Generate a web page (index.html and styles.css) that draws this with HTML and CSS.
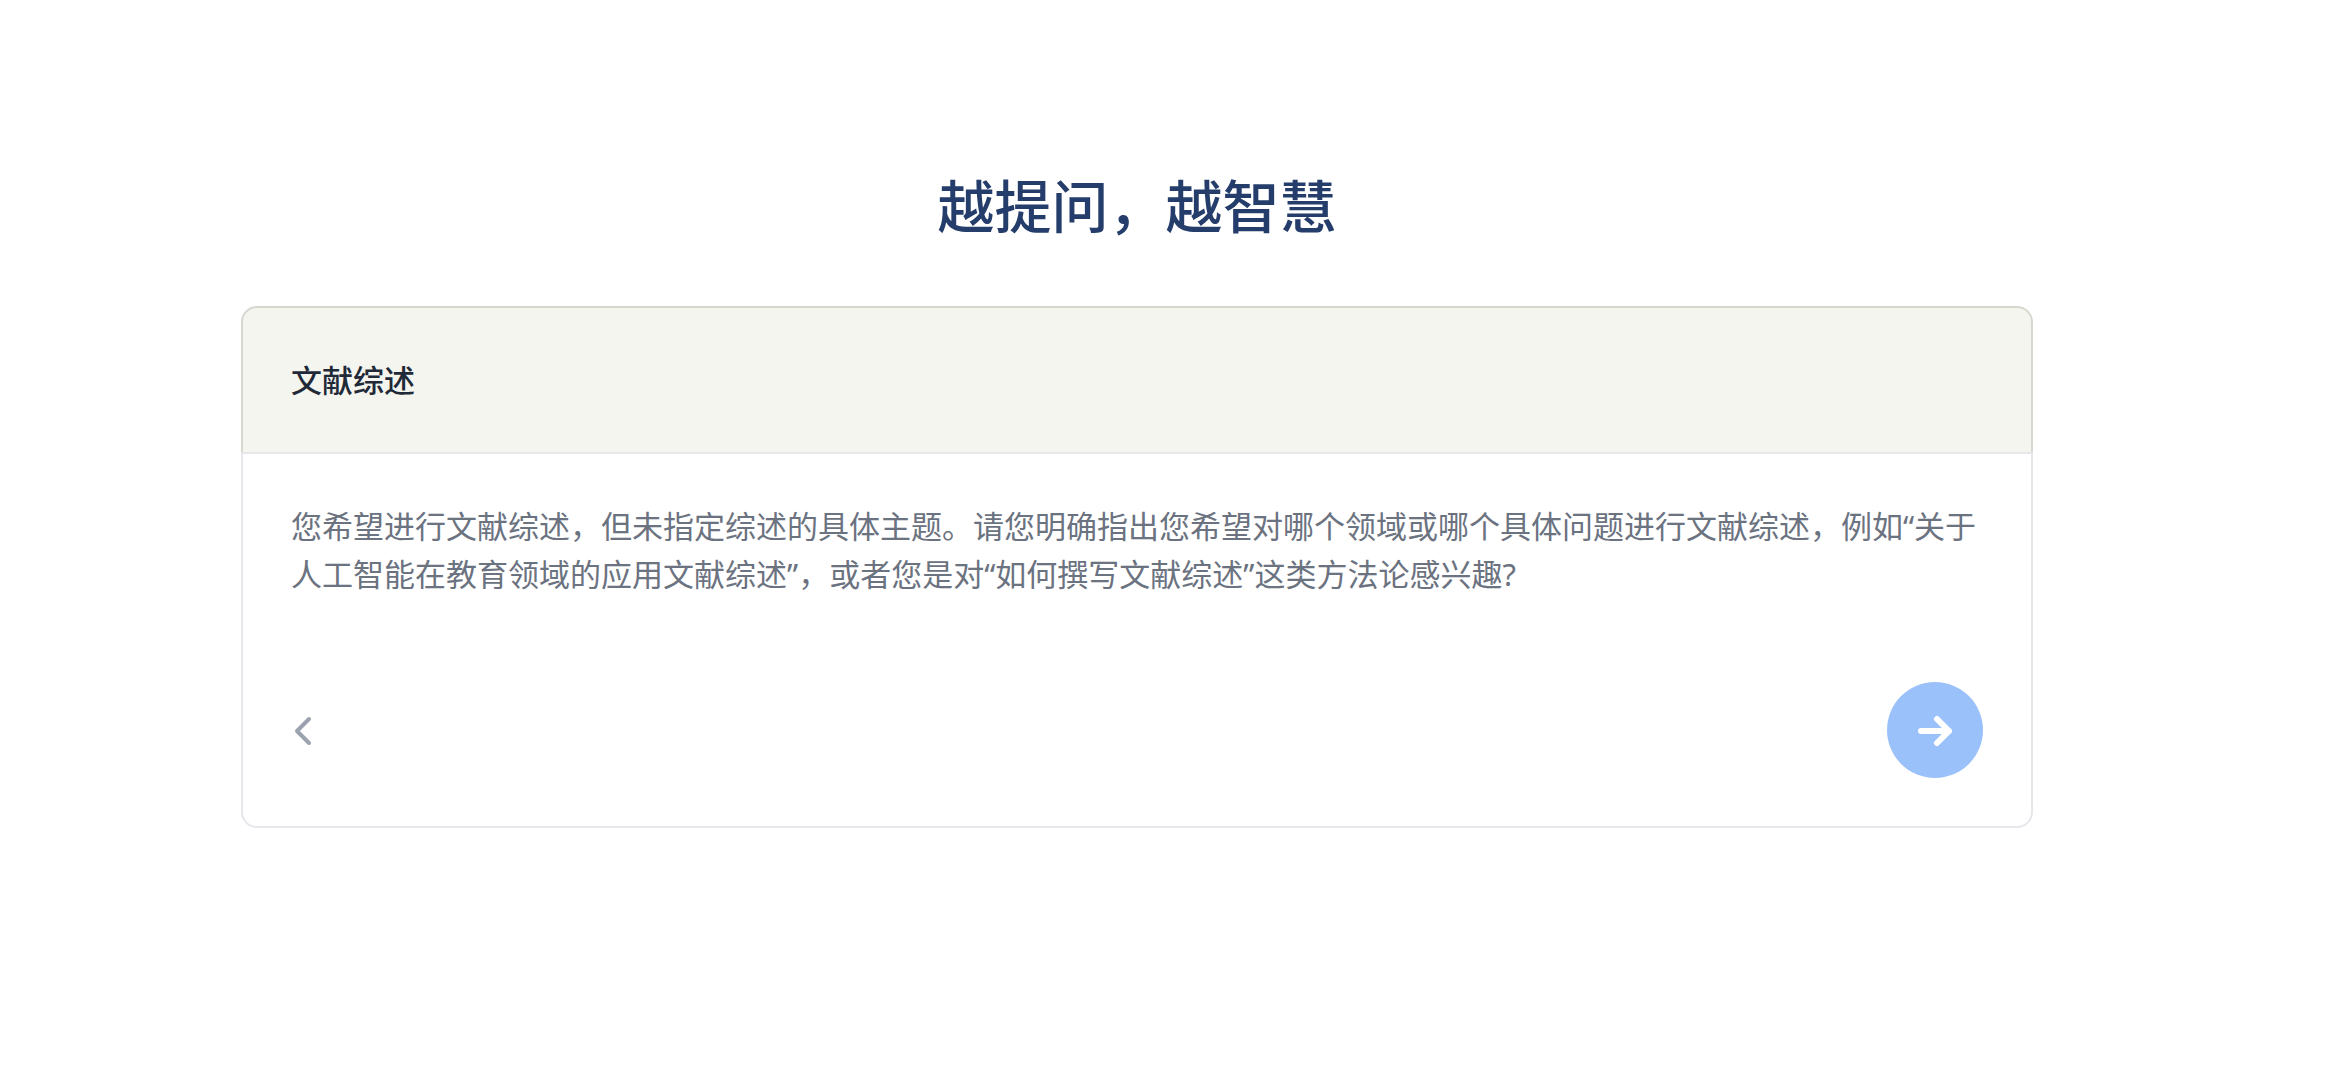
FILE: index.html
```html
<!DOCTYPE html>
<html lang="zh-CN">
<head>
<meta charset="utf-8">
<meta name="viewport" content="width=device-width, initial-scale=1">
<title>越提问，越智慧</title>
<link rel="stylesheet" href="styles.css">
</head>
<body>
<main class="page">
  <h1 class="page-title">越提问，越智慧</h1>
  <section class="card">
    <header class="card-header">
      <h2 class="card-title">文献综述</h2>
    </header>
    <div class="card-body">
      <p class="card-text">您希望进行文献综述，但未指定综述的具体主题。请您明确指出您希望对哪个领域或哪个具体问题进行文献综述，例如“关于人工智能在教育领域的应用文献综述”，或者您是对“如何撰写文献综述”这类方法论感兴趣?</p>
      <div class="card-actions">
        <button class="back-button" type="button" aria-label="返回">
          <svg class="back-icon" viewBox="0 0 24 32" aria-hidden="true"><path d="M18 5 6 17 18 29"/></svg>
        </button>
        <button class="next-button" type="button" aria-label="下一步">
          <svg class="next-icon" viewBox="0 0 40 40" aria-hidden="true"><path d="M6 21H34M22 9 34 21 22 33"/></svg>
        </button>
      </div>
    </div>
  </section>
</main>
</body>
</html>
```
FILE: styles.css
```css
* {
  box-sizing: border-box;
}

body {
  margin: 0;
  background: #fff;
  font-family: "Noto Sans", "Noto Sans CJK SC", sans-serif;
}

.page {
  padding: 174px 313px 96px 241px;
}

.page-title {
  margin: 0 0 68px;
  color: #253d6b;
  font-size: 57px;
  font-weight: 500;
  line-height: 64px;
  text-align: center;
}

.card-header {
  padding: 48px;
  border: 2px solid #d6d8d0;
  border-bottom: 0;
  border-radius: 16px 16px 0 0;
  background: #f4f5ee;
}

.card-title {
  margin: 0;
  color: #1f2937;
  font-size: 31px;
  font-weight: 500;
  line-height: 48px;
}

.card-body {
  padding: 48px;
  border: 2px solid #e5e7eb;
  border-radius: 0 0 16px 16px;
}

.card-text {
  margin: 0;
  color: #6b7280;
  font-size: 31px;
  line-height: 48px;
}

.card-actions {
  display: flex;
  align-items: center;
  justify-content: space-between;
  margin-top: 84px;
}

.back-button,
.next-button {
  display: flex;
  align-items: center;
  padding: 0;
  border: 0;
  background: none;
  cursor: pointer;
}

.next-button {
  justify-content: center;
  width: 96px;
  height: 96px;
  border-radius: 50%;
  background: #9bc1fb;
}

.back-icon,
.next-icon {
  fill: none;
  stroke-linecap: round;
  stroke-linejoin: round;
}

.back-icon {
  width: 24px;
  height: 32px;
  stroke: #9ca3af;
  stroke-width: 4;
}

.next-icon {
  width: 40px;
  height: 40px;
  stroke: #fff;
  stroke-width: 6;
}
```
